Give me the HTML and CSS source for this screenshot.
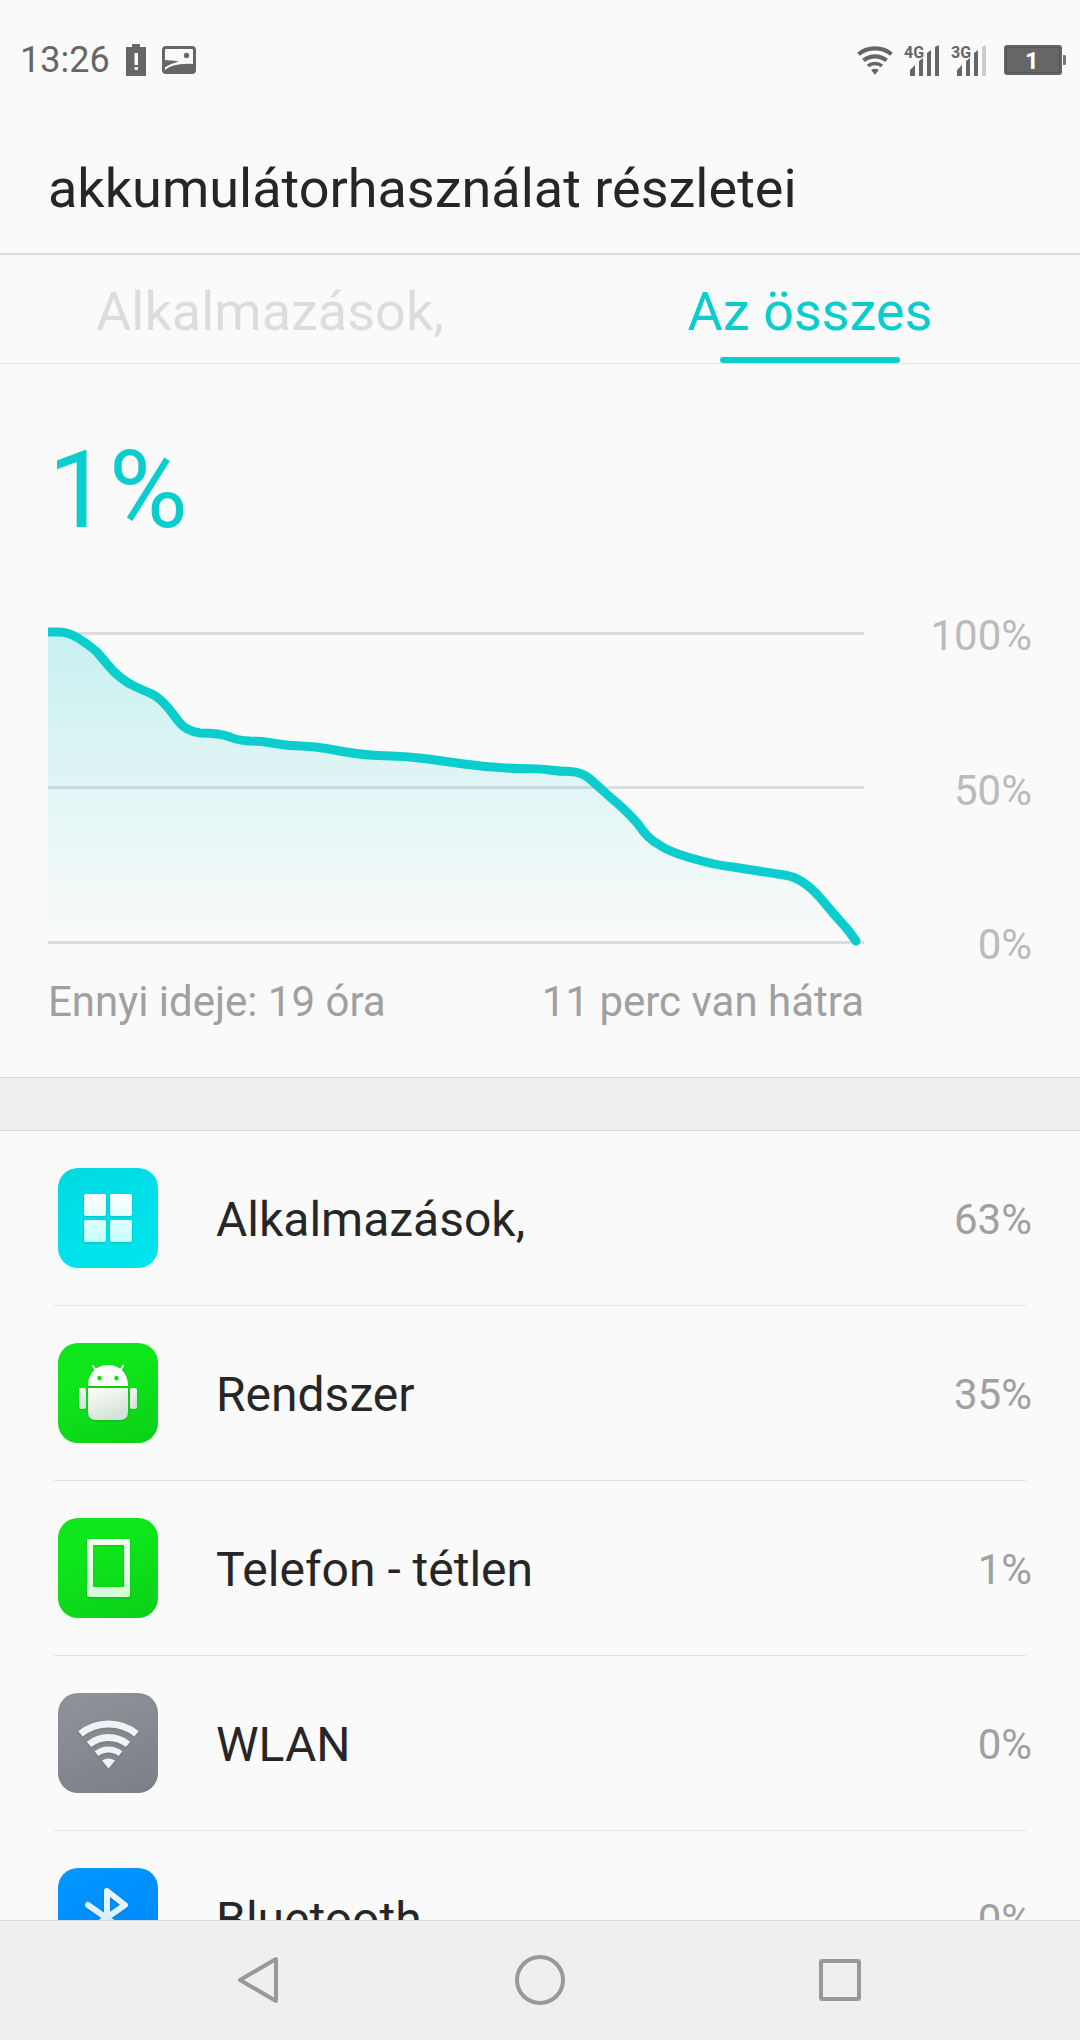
FILE: index.html
```html
<!DOCTYPE html>
<html lang="hu">
<head>
  <meta charset="utf-8">
  <meta name="viewport" content="width=device-width, initial-scale=1">
  <title>akkumulátorhasználat részletei</title>
  <link rel="stylesheet" href="styles.css">
</head>
<body>

<!-- shared shapes and gradients -->
<svg class="defs" aria-hidden="true">
  <defs>
    <symbol id="wifi" viewBox="20 27 61 49">
      <path d="M22.500 40.900A44.500 44.500 0 0 1 78.500 40.900" fill="none" stroke="currentColor" stroke-width="7"/>
      <path d="M31 51.400A31 31 0 0 1 70 51.400" fill="none" stroke="currentColor" stroke-width="7"/>
      <path d="M38.500 60.700A19 19 0 0 1 62.500 60.700" fill="none" stroke="currentColor" stroke-width="6"/>
      <path d="M44 67.500Q50.500 63.500 57 67.500L50.500 75.500z" fill="currentColor"/>
    </symbol>
    <linearGradient id="area" x1="0" y1="0" x2="0" y2="1">
      <stop offset="0" stop-color="#0bcdcd" stop-opacity=".21"/>
      <stop offset="1" stop-color="#0bcdcd" stop-opacity="0"/>
    </linearGradient>
    <linearGradient id="tiles" gradientUnits="userSpaceOnUse" x1="0" y1="26" x2="0" y2="74">
      <stop offset="0" stop-color="#fff"/>
      <stop offset="1" stop-color="#c4fffb"/>
    </linearGradient>
    <linearGradient id="robot" x1="0" y1="0" x2=".5" y2="1">
      <stop offset="0" stop-color="#fff"/>
      <stop offset="1" stop-color="#d2e2d4"/>
    </linearGradient>
    <linearGradient id="device" x1="0" y1="0" x2="0" y2="1">
      <stop offset="0" stop-color="#f2fff3"/>
      <stop offset="1" stop-color="#d2fdd6"/>
    </linearGradient>
    <linearGradient id="blue" gradientUnits="userSpaceOnUse" x1="0" y1="20" x2="0" y2="80">
      <stop offset="0" stop-color="#f0f8ff"/>
      <stop offset="1" stop-color="#c4e4ff"/>
    </linearGradient>
  </defs>
</svg>

<div class="screen">
  <div class="status">
    <span class="time">13:26</span>
    <svg class="low-battery" width="20" height="32" viewBox="0 0 20 32">
      <path d="M6 0h8v3h6v29H0V3h6z" fill="#666"/>
      <path d="M8.500 9h3.500v12H8.500zM8.500 23h3.500v3H8.500z" fill="#fafafa"/>
    </svg>
    <svg width="34" height="28" viewBox="0 0 34 28">
      <rect x="1.500" y="1.500" width="31" height="25" rx="2.500" fill="none" stroke="#666" stroke-width="3"/>
      <path d="M2 14Q8 14 17 15.500Q8 17.500 2 22zM2 25Q10 16.500 32 18v8H2z" fill="#666"/>
      <circle cx="24.500" cy="9.500" r="2.700" fill="#666"/>
    </svg>
    <div class="status-right">
      <svg width="36" height="29"><use href="#wifi"/></svg>
      <svg class="signal" width="36" height="31" viewBox="0 0 36 31">
        <text x="0" y="13">4G</text>
        <path d="M6 25l5-5v11H6zM15 16l4-3v18h-4zM23 8l4-3v26h-4zM31 2l4-2v31h-4z" fill="#666"/>
      </svg>
      <svg class="signal" width="36" height="31" viewBox="0 0 36 31">
        <text x="0" y="13">3G</text>
        <path d="M6 25l5-5v11H6zM15 16l4-3v18h-4zM23 8l4-3v26h-4z" fill="#666"/>
        <path d="M31 2l4-2v31h-4z" fill="#ccc"/>
      </svg>
      <svg class="battery" width="62" height="30" viewBox="0 0 62 30">
        <rect width="58" height="30" rx="3" fill="#666"/>
        <rect x="2.500" y="2.500" width="53" height="25" fill="none" stroke="#555"/>
        <path d="M59 10h1.500q1.500 0 1.500 1.500v7q0 1.500-1.500 1.500H59z" fill="#777"/>
        <text x="28" y="24" text-anchor="middle">1</text>
      </svg>
    </div>
  </div>

  <h1 class="title">akkumulátorhasználat részletei</h1>

  <div class="tabs" role="tablist">
    <button class="tab" role="tab" aria-selected="false">Alkalmazások,</button>
    <button class="tab active" role="tab" aria-selected="true">Az összes</button>
  </div>

  <div class="usage">
    <div class="percent">1%</div>
    <div class="chart">
      <div class="plot">
        <svg class="graph" viewBox="0 0 816 322">
          <path d="M0 9.500H816M0 163.500H816M0 318.500H816" stroke="#dcdcdc" stroke-width="3"/>
          <path d="M0 8H11Q20 8 30 14Q40 20 49 28L59 40Q72 56 88 63L104 70Q114 75 125 90L131 97Q140 109 155 109.500Q172 109 182 113Q190 116.500 202 117Q213 117 227 119.500Q241 122 253 122Q268 122.500 281 125Q312 131 330 131.500Q358 132 380 135L416 140Q444 144 472 144.500Q493 144.500 502 146Q512 147.500 522 147.500Q534 148 542 155L562 173Q578 186 590 200Q601 216 610 220Q622 229 654 237Q668 241 685 243L736 251Q755 253 774 276L785 289L800 306L808 317.500H0z" fill="url(#area)"/>
          <path d="M0 8H11Q20 8 30 14Q40 20 49 28L59 40Q72 56 88 63L104 70Q114 75 125 90L131 98Q138 107 152 109Q172 109 182 113Q190 116.500 202 117Q213 117 227 119.500Q241 122 253 122Q268 122.500 281 125Q312 131 330 131.500Q358 132 380 135L416 140Q444 144 472 144.500Q493 144.500 502 146Q512 147.500 522 147.500Q534 148 542 155L562 173Q578 186 590 200Q600 215 610 220Q622 229 654 237Q668 241 685 243L736 251Q755 253 774 276L785 289L800 306L808 317" fill="none" stroke="#0bcdcd" stroke-width="9" stroke-linecap="round" stroke-linejoin="round"/>
        </svg>
      </div>
      <div class="axis">
        <span>100%</span>
        <span>50%</span>
        <span>0%</span>
      </div>
    </div>
    <div class="times">
      <span>Ennyi ideje: 19 óra</span>
      <span>11 perc van hátra</span>
    </div>
  </div>

  <div class="divider"></div>

  <ul class="list">
    <li class="row">
      <svg class="icon apps" viewBox="0 0 100 100">
        <g fill="url(#tiles)">
          <rect x="26" y="26" width="22" height="22" rx="2"/>
          <rect x="52" y="26" width="22" height="22" rx="2"/>
          <rect x="26" y="52" width="22" height="22" rx="2"/>
          <rect x="52" y="52" width="22" height="22" rx="2"/>
        </g>
      </svg>
      <span class="name">Alkalmazások,</span>
      <span class="value">63%</span>
    </li>
    <li class="row">
      <svg class="icon system" viewBox="0 0 100 100">
        <path d="M35 23l3 5M65 23l-3 5" stroke="#fff" stroke-width="2" stroke-linecap="round"/>
        <path d="M30 43C30 30 38 22 50 22S70 30 70 43z" fill="#fff"/>
        <circle cx="41.500" cy="35" r="2.200" fill="#0ddf1a"/>
        <circle cx="58.500" cy="35" r="2.200" fill="#0ddf1a"/>
        <path d="M30 45h40v24q0 8-8 8H38q-8 0-8-8z" fill="url(#robot)"/>
        <rect x="21" y="45" width="7" height="21" rx="2" fill="url(#robot)"/>
        <rect x="72" y="45" width="7" height="21" rx="2" fill="url(#robot)"/>
      </svg>
      <span class="name">Rendszer</span>
      <span class="value">35%</span>
    </li>
    <li class="row">
      <svg class="icon system" viewBox="0 0 100 100">
        <path d="M31 21H70q2 0 2 2V77q0 2-2 2H31q-2 0-2-2V23q0-2 2-2zM36 27q-1 0-1 1V68q0 1 1 1H65q1 0 1-1V28q0-1-1-1z" fill="url(#device)" fill-rule="evenodd"/>
      </svg>
      <span class="name">Telefon - tétlen</span>
      <span class="value">1%</span>
    </li>
    <li class="row">
      <svg class="icon wlan" viewBox="0 0 100 100">
        <use href="#wifi" x="20" y="27" width="61" height="49"/>
      </svg>
      <span class="name">WLAN</span>
      <span class="value">0%</span>
    </li>
    <li class="row">
      <svg class="icon bluetooth" viewBox="0 0 100 100">
        <path d="M30 37L67 63L49 77V23L67 37L30 63" fill="none" stroke="url(#blue)" stroke-width="6" stroke-linecap="round" stroke-linejoin="round"/>
      </svg>
      <span class="name">Bluetooth</span>
      <span class="value">0%</span>
    </li>
  </ul>

  <div class="nav">
    <button aria-label="Vissza">
      <svg viewBox="0 0 100 60"><path d="M50 30L86 9V51z"/></svg>
    </button>
    <button aria-label="Kezdőképernyő">
      <svg viewBox="0 0 100 60"><circle cx="50" cy="30" r="23"/></svg>
    </button>
    <button aria-label="Legutóbbiak">
      <svg viewBox="0 0 100 60"><rect x="31" y="11" width="38" height="38" rx="1"/></svg>
    </button>
  </div>
</div>

</body>
</html>
```
FILE: styles.css
```css
* {
  box-sizing: border-box;
}

body {
  margin: 0;
  background: #fafafa;
  color: #262626;
  font-family: Roboto, sans-serif;
}

svg {
  display: block;
  flex-shrink: 0;
}

button {
  padding: 0;
  border: none;
  background: none;
  font-family: inherit;
  cursor: pointer;
}

.defs {
  position: absolute;
  width: 0;
  height: 0;
}

.screen {
  display: flex;
  flex-direction: column;
  height: 100vh;
  overflow: hidden;
}

.screen > * {
  flex-shrink: 0;
}

/* status bar */
.status {
  display: flex;
  align-items: center;
  gap: 16px;
  height: 120px;
  padding: 0 14px 0 20px;
  color: #666;
}

.time {
  font-size: 36px;
}

.status-right {
  display: flex;
  align-items: center;
  gap: 11px;
  margin-left: auto;
}

.signal text {
  font-size: 16px;
  font-weight: bold;
  fill: #666;
}

.battery {
  margin-left: 6px;
}

.battery text {
  font-size: 24px;
  font-weight: bold;
  fill: #fff;
}

/* header */
.title {
  margin: 0;
  padding: 37px 48px 32px;
  border-bottom: 2px solid #dcdcdc;
  font-size: 54px;
  line-height: 64px;
  font-weight: normal;
}

.tabs {
  display: flex;
  border-bottom: 1px solid #e2e2e2;
}

.tab {
  position: relative;
  flex: 1;
  padding: 25px 0 19px;
  font-size: 54px;
  line-height: 64px;
  color: #dcdcdc;
}

.tab.active {
  color: #0bcdcd;
}

.tab.active::after {
  content: "";
  position: absolute;
  left: 50%;
  bottom: 0;
  width: 180px;
  height: 6px;
  margin-left: -90px;
  border-radius: 3px;
  background: #0bcdcd;
}

/* battery graph */
.usage {
  padding: 66px 48px 51px;
}

.percent {
  font-size: 108px;
  line-height: 120px;
  color: #0bcdcd;
}

.chart {
  display: flex;
  margin-top: 62px;
}

.plot {
  flex: 1;
  padding: 12px 0 23px;
}

.graph {
  width: 100%;
}

.axis {
  display: flex;
  flex-direction: column;
  justify-content: space-between;
  width: 168px;
  font-size: 42px;
  line-height: 48px;
  text-align: right;
  color: #bbb;
}

.times {
  display: flex;
  justify-content: space-between;
  margin: 9px 168px 0 0;
  font-size: 42px;
  line-height: 48px;
  color: #a0a0a0;
}

.divider {
  height: 54px;
  border-top: 1px solid #dadada;
  border-bottom: 1px solid #dadada;
  background: #efefef;
}

/* consumers */
.screen > .list {
  flex: 1 1 0;
  min-height: 0;
  margin: 0;
  padding: 0 54px;
  overflow: hidden;
  list-style: none;
}

.row {
  display: flex;
  align-items: center;
  height: 175px;
  border-bottom: 1px solid #e2e2e2;
}

.icon {
  width: 100px;
  height: 100px;
  margin: 0 58px 0 4px;
  border-radius: 20px;
}

.icon > * {
  filter: drop-shadow(0 1px 1px rgba(0, 0, 0, 0.15));
}

.apps {
  background: linear-gradient(160deg, #00dae2, #00e5ee);
}

.system {
  background: linear-gradient(160deg, #0ee61b 30%, #0bd118);
}

.wlan {
  background: linear-gradient(160deg, #8e939a, #7d7f87);
  color: #f1f2f5;
}

.bluetooth {
  background: linear-gradient(160deg, #0098ff, #0084ff);
}

.name,
.value {
  padding-top: 2px;
}

.name {
  flex: 1;
  font-size: 48px;
}

.value {
  margin-right: -6px;
  font-size: 42px;
  color: #a0a0a0;
}

/* navigation bar */
.nav {
  display: flex;
  justify-content: center;
  height: 120px;
  padding-bottom: 2px;
  border-top: 1px solid #dadada;
  background: #efefef;
}

.nav button {
  display: flex;
  align-items: center;
  justify-content: center;
  flex: 0 1 300px;
}

.nav svg {
  width: 100px;
  height: 60px;
  fill: none;
  stroke: #999;
  stroke-width: 4;
  stroke-linejoin: round;
}
```
